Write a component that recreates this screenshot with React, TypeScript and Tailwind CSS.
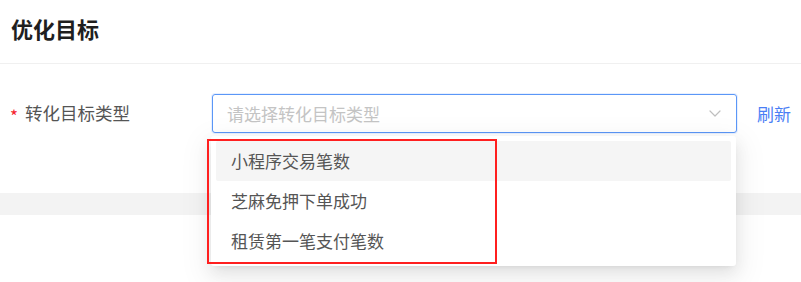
import React from 'react';

const options = ['小程序交易笔数', '芝麻免押下单成功', '租赁第一笔支付笔数'];

const ChevronDown = () => (
  <svg width="12" height="7" viewBox="0 0 12 7" fill="none">
    <path d="M1 1l5 5 5-5" stroke="#bfbfbf" strokeWidth="1.2" strokeLinecap="round" strokeLinejoin="round" />
  </svg>
);

export default function App() {
  return (
    <div
      className="relative h-[282px] w-full overflow-hidden bg-white"
      style={{ fontFamily: '"Noto Sans CJK SC", "Noto Sans", sans-serif' }}
    >
      {/* Header */}
      <div className="flex h-[64px] items-center border-b border-[#f0f0f0] px-[11px] pb-[7px]">
        <h1 className="text-[22px] font-bold leading-none text-[#1f1f1f]">优化目标</h1>
      </div>

      {/* Form row */}
      <div className="h-[129px] pt-[30px]">
        <div className="flex items-center">
          <div className="flex w-[212px] items-center pl-[10px] text-[17.5px] text-[#555]">
            <span className="mr-[7px] mt-[4px] text-[17px] leading-none text-[#f5222d]">*</span>
            <span>转化目标类型</span>
          </div>

          <div className="relative">
            <div className="flex h-[39px] w-[525px] items-center justify-between rounded-[3px] border border-[#5b97f7] pl-[14px] pr-[15px] shadow-[0_0_0_1px_rgba(64,128,255,0.12)]">
              <span className="text-[17px] text-[#c4c4c4]">请选择转化目标类型</span>
              <ChevronDown />
            </div>

            {/* Dropdown */}
            <div className="absolute left-[-1px] top-[42px] z-10 w-[525px] rounded-[3px] bg-white p-[5px] shadow-[0_6px_16px_0_rgba(0,0,0,0.08),0_3px_6px_-4px_rgba(0,0,0,0.12),0_9px_28px_8px_rgba(0,0,0,0.05)]">
              {options.map((opt, i) => (
                <div
                  key={opt}
                  className={`flex h-[40px] items-center rounded-[2px] pl-[15px] text-[17px] text-[#555] ${
                    i === 0 ? 'bg-[#f5f5f5]' : ''
                  }`}
                >
                  {opt}
                </div>
              ))}
            </div>

            {/* Annotation box */}
            <div className="absolute left-[-5px] top-[45px] z-20 h-[125px] w-[290px] border-2 border-[#ff1f1f]" />
          </div>

          <span className="ml-[20px] text-[17px] text-[#4a7ef5]">刷新</span>
        </div>
      </div>

      {/* Section separator */}
      <div className="h-[22px] bg-[#f3f3f3]" />
    </div>
  );
}
